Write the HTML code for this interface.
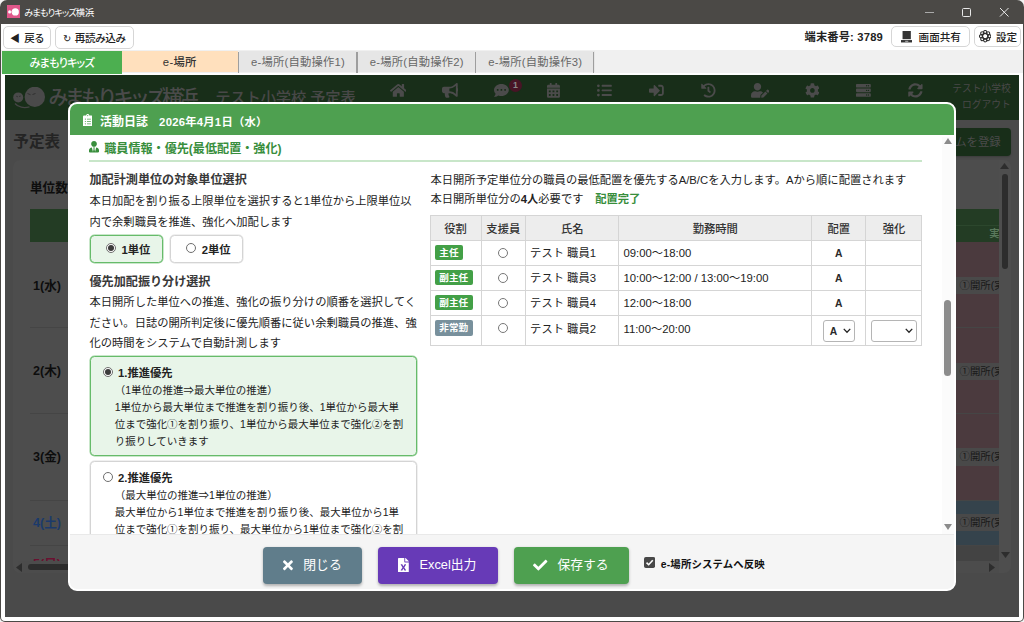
<!DOCTYPE html>
<html lang="ja">
<head>
<meta charset="utf-8">
<title>みまもりキッズ横浜</title>
<style>
*{box-sizing:border-box;margin:0;padding:0}
html,body{width:1024px;height:622px;overflow:hidden;background:#f2f2f2}
body{font-family:"Liberation Sans","Noto Sans CJK JP",sans-serif;color:#222;position:relative}
.abs{position:absolute}
#win{position:absolute;left:0;top:0;width:1024px;height:622px;background:#4b4946;border-radius:7px 7px 5px 5px;overflow:hidden}
#client{position:absolute;left:1.3px;top:24px;width:1021.3px;height:596.6px;background:#fff;border-radius:0 0 4px 4px}
#title{position:absolute;left:24.3px;top:4.6px;height:16px;line-height:16px;font-size:9.2px;color:#fff;font-feature-settings:"palt";letter-spacing:-0.95px;white-space:nowrap}
.tbtn{position:absolute;top:26px;height:22.5px;border:1px solid #d6d6d6;border-radius:5px;background:#fff;font-size:10.6px;font-weight:500;color:#222;line-height:23px;white-space:nowrap}
.tab{position:absolute;top:51.3px;height:20.7px;line-height:22.4px;text-align:center;font-size:11.3px;white-space:nowrap}
.tbtn.r{height:20.5px;line-height:21.5px}
#web{position:absolute;left:5px;top:75px;width:1013.8px;height:542.4px;background:#4a4a4a;overflow:hidden}
.cel{left:940px;width:54px;height:17.5px;background:#494949;color:#191919;font-size:10.4px;line-height:17.5px;padding-left:14.5px;white-space:nowrap;overflow:hidden}
.hl{left:24.5px;width:969.5px;height:1.2px;background:#454545}
.day{left:28px;font-size:12.6px;line-height:20px;font-weight:700;color:#0d0d0d;white-space:nowrap}
#modal{position:absolute;left:63px;top:27px;width:888px;height:488.6px;background:#fff;border-radius:9px;overflow:hidden;border:2px solid #fff}
#mhead{position:absolute;left:0;top:0;width:884px;height:30.5px;background:#4ea050;color:#fff;line-height:36.6px;white-space:nowrap}
#mbody{position:absolute;left:0;top:30.5px;width:884px;height:399px;overflow:hidden;background:#fff}
#mfoot{position:absolute;left:0;top:429.5px;width:884px;height:57px;background:#f5f5f5;border-top:1px solid #e9e9e9}
.sec{font-size:12.1px;font-weight:700;color:#388e3c;line-height:20px;white-space:nowrap}
.h4{font-size:12.1px;font-weight:700;color:#383838;line-height:20px;white-space:nowrap}
.p{font-size:11.29px;color:#222;line-height:20.4px;white-space:nowrap}
.opt{border:1px solid #d4d4d4;border-radius:4.5px;background:#fff;box-shadow:0 0 0 .5px rgba(212,212,212,.7)}
.opt.on{border-color:#66bb6a;background:#e8f5e9;box-shadow:0 0 0 .5px rgba(102,187,106,.7)}
.opt b,.opt i{position:absolute;white-space:nowrap}
.opt b{font-size:11.3px;font-weight:700;color:#222}
.rd{width:10.2px;height:10.2px;border-radius:50%;border:1px solid #6e6e6e;background:#fff}
.rd.on::after{content:"";position:absolute;left:1.1px;top:1.1px;width:6px;height:6px;border-radius:50%;background:#3c3c3c}
.d{font-size:10.49px;line-height:17.1px;color:#222;white-space:nowrap}
#tb{position:absolute;left:359.5px;top:80.6px;border-collapse:collapse;table-layout:fixed;font-size:11.3px;color:#222}
#tb th,#tb td{border:1px solid #d5d5d5;padding:0 4px 1.8px 4px;white-space:nowrap;overflow:hidden}
#tb th{background:#ededed;font-weight:500;color:#333;height:25px;text-align:center;padding:0 0 1.2px 0}
#tb tr{height:25px}
#tb tr.hd{height:25px}
#tb tr.r1{height:25px}
#tb tr.last{height:29.8px}
#tb tr.last td{vertical-align:top;line-height:24.6px;padding-bottom:0}
#tb .t{position:relative;top:-0.6px}
#tb tr.last .t{top:0.5px}
#tb tr.last .bdg,#tb tr.last .rd2{position:relative;top:-1.1px}
#tb tr.last td.s{padding-top:3.6px;line-height:20px}
#tb td b{font-size:10.3px;color:#2a2a2a;position:relative;top:0.8px}
#tb td .sel b{top:0}
#tb td.c{text-align:center;padding:0 0 1.8px 0}
.bdg{display:inline-block;background:#43a047;color:#fff;font-size:9.6px;font-weight:700;line-height:15.2px;height:15.2px;padding:0 4.5px;border-radius:2px;vertical-align:middle;margin-left:0.3px}
.bdg.g{background:#78909c}
.rd2{display:inline-block;width:10.4px;height:10.4px;border-radius:50%;border:1px solid #777;background:#fff;vertical-align:middle}
.sel{display:inline-block;height:22px;border:1px solid #b5b5b5;border-radius:3px;background:#fff;vertical-align:middle;position:relative;text-align:left;line-height:20px;padding-left:6px}
.sel svg{position:absolute;right:2.8px;top:7.4px}
.btn{height:36.5px;border-radius:4px;color:#fff;font-size:12.8px;line-height:36.5px;white-space:nowrap;box-shadow:0 1.5px 3px rgba(0,0,0,.28)}
</style>
</head>
<body>
<div id="win">
  <svg class="abs" style="left:7px;top:5px" width="13" height="13" viewBox="0 0 13 13"><rect width="13" height="13" fill="#e0578a"/><circle cx="2.700" cy="6.900" r="1.600" fill="#fff"/><circle cx="8.3" cy="6.9" r="3.6" fill="#fff"/><path d="M3.500 6.900h2" stroke="#f5c0d4" stroke-width="1"/></svg>
  <div id="title">みまもりキッズ<span style="letter-spacing:0.1px">横浜</span></div>
  <svg class="abs" style="left:920px;top:4px" width="100" height="16" viewBox="0 0 100 16" fill="none" stroke="#e8e8e8" stroke-width="1"><path d="M5 8.5h9" stroke="#aaa"/><rect x="42.5" y="4.5" width="8" height="8" rx="1"/><path d="M80 4l8.5 8.5M88.5 4L80 12.5"/></svg>
  <div id="client"></div>

  <!-- toolbar -->
  <div class="tbtn" style="left:3px;width:47.5px"><span class="abs" style="left:6px;top:0;font-size:10px">◀</span><span class="abs" style="left:20.3px;top:0;font-feature-settings:'palt';letter-spacing:-0.3px">戻る</span></div>
  <div class="tbtn" style="left:55px;width:78.6px"><span class="abs" style="left:7px;top:0;font-size:10px;font-family:'DejaVu Sans',sans-serif">↻</span><span class="abs" style="left:18.8px;top:0;font-feature-settings:'palt';letter-spacing:-0.35px">再読み込み</span></div>
  <div class="abs" style="left:804.5px;top:27px;height:20px;line-height:20px;font-size:11.2px;font-weight:700;color:#222;white-space:nowrap;letter-spacing:0.2px">端末番号: 3789</div>
  <div class="tbtn r" style="left:890.8px;width:79.6px"><svg class="abs" style="left:9.2px;top:3.6px" width="11.4" height="12" viewBox="0 0 11 11" preserveAspectRatio="none"><rect x="1.5" y="0" width="8" height="7.5" fill="#333"/><rect x="0" y="8.3" width="11" height="2.2" fill="#333"/><rect x="4" y="9" width="3" height="0.8" fill="#ccc"/></svg><span class="abs" style="left:26.8px;top:0">画面共有</span></div>
  <div class="tbtn r" style="left:973.5px;width:47px"><svg class="abs" style="left:4.3px;top:3.3px" width="12.4" height="12.4" viewBox="0 0 12 12" fill="none" stroke="#2e2e2e" stroke-width="1.05"><circle cx="10.00" cy="6.00" r="1.55"/><circle cx="8.83" cy="8.83" r="1.55"/><circle cx="6.00" cy="10.00" r="1.55"/><circle cx="3.17" cy="8.83" r="1.55"/><circle cx="2.00" cy="6.00" r="1.55"/><circle cx="3.17" cy="3.17" r="1.55"/><circle cx="6.00" cy="2.00" r="1.55"/><circle cx="8.83" cy="3.17" r="1.55"/><circle cx="6" cy="6" r="2.7" stroke-width="1.3"/></svg><span class="abs" style="left:21.5px;top:0">設定</span></div>
  <!-- tabs -->
  <div class="abs" style="left:1px;top:50px;width:1022px;height:23.4px;background:#f0f0f0"></div>
  <div class="tab" style="left:2px;width:119.5px;top:50.6px;height:23px;line-height:24px;background:#4caf50;color:#fff;font-feature-settings:'palt';letter-spacing:-0.75px;font-size:11px;font-weight:500">みまもりキッズ</div>
  <div class="tab" style="left:121.5px;width:116.5px;background:#ffe0bd;color:#333;letter-spacing:0.3px;font-weight:500">e-場所</div>
  <div class="tab" style="left:238.5px;width:119px;background:#e6e6e6;color:#666;letter-spacing:0.22px">e-場所(自動操作1)</div>
  <div class="tab" style="left:357.5px;width:118.5px;background:#e6e6e6;color:#666;letter-spacing:0.22px">e-場所(自動操作2)</div>
  <div class="tab" style="left:476px;width:118.5px;background:#e6e6e6;color:#666;letter-spacing:0.22px">e-場所(自動操作3)</div>
  <div class="abs" style="left:237.6px;top:51.5px;width:1.4px;height:21px;background:#9e9e9e"></div><div class="abs" style="left:356.2px;top:51.5px;width:1.4px;height:21px;background:#9e9e9e"></div><div class="abs" style="left:474.6px;top:51.5px;width:1.4px;height:21px;background:#9e9e9e"></div><div class="abs" style="left:593.1px;top:51.5px;width:1.4px;height:21px;background:#9e9e9e"></div>
  <div id="web">

    <!-- dimmed page -->
    <div class="abs" style="left:0;top:0;width:1014px;height:44.5px;background:#182e19"></div>
    <svg class="abs" style="left:8px;top:12px" width="36" height="24" viewBox="0 0 36 24"><circle cx="5.200" cy="10.400" r="5" fill="#4a4a4a"/><path d="M2 16.500c3 3.800 9 5 14.500 3.300" stroke="#454545" stroke-width="1.300" fill="none"/><circle cx="21.800" cy="9.900" r="10.200" fill="#4a4a4a"/><path d="M14.500 6.500l3 1.200M19.500 7.500l3-1M3.300 9.200l1.500.6M6.200 9.500l1.500-.5" stroke="#2c2c2c" stroke-width="0.900"/></svg>
    <div class="abs" style="left:43.6px;top:9.2px;font-size:20px;line-height:28px;font-weight:500;color:#4a4a4a;white-space:nowrap;letter-spacing:-3.75px" id="logo">みまもりキッズ横浜</div>
    <div class="abs" style="left:210.2px;top:10.4px;font-size:15.3px;line-height:26px;font-weight:500;color:#484848;white-space:nowrap;letter-spacing:-0.15px" id="school">テスト小学校 予定表</div>
    <div class="abs" style="right:8px;top:5.6px;font-size:9.75px;line-height:16.3px;color:#484848;text-align:right;white-space:nowrap">テスト小学校<br>ログアウト</div>
    <!-- navbar icons -->
    <svg class="abs" style="left:384.68px;top:8px" width="16.65" height="14.8" viewBox="0 0 576 512"><path d="M280.37 148.26L96 300.11V464a16 16 0 0 0 16 16l112.06-.29a16 16 0 0 0 15.92-16V368a16 16 0 0 1 16-16h64a16 16 0 0 1 16 16v95.64a16 16 0 0 0 16 16.05L464 480a16 16 0 0 0 16-16V300L295.67 148.26a12.19 12.19 0 0 0-15.3 0zM571.6 251.47L488 182.56V44.05a12 12 0 0 0-12-12h-56a12 12 0 0 0-12 12v72.61L318.47 43a48 48 0 0 0-61 0L4.34 251.47a12 12 0 0 0-1.6 16.9l25.5 31A12 12 0 0 0 45.15 301l235.22-193.74a12.19 12.19 0 0 1 15.3 0L530.9 301a12 12 0 0 0 16.9-1.6l25.5-31a12 12 0 0 0-1.7-16.93z" fill="#4b4b4b"/></svg>
    <svg class="abs" style="left:436.57px;top:8px" width="16.65" height="14.8" viewBox="0 0 576 512"><path d="M576 240c0-23.63-12.95-44.04-32-55.12V32.01C544 23.26 537.02 0 512 0c-7.12 0-14.19 2.38-19.98 7.02l-85.03 68.03C364.28 109.19 310.66 128 256 128H64c-35.35 0-64 28.65-64 64v96c0 35.35 28.65 64 64 64h33.7c-1.39 10.48-2.18 21.14-2.18 32 0 39.77 9.26 77.35 25.56 110.94 5.19 10.69 16.52 17.06 28.4 17.06h74.28c26.05 0 41.69-29.84 25.9-50.56-16.4-21.52-26.15-48.36-26.15-77.44 0-11.11 1.62-21.79 4.41-32H256c54.66 0 108.28 18.81 150.98 52.95l85.03 68.03a32.023 32.023 0 0 0 19.98 7.02c24.92 0 32-22.78 32-32V295.13C563.05 284.04 576 263.63 576 240zm-96 141.42l-33.05-26.44C392.95 311.78 325.12 288 256 288v-96c69.12 0 136.95-23.78 190.95-66.98L480 98.58v282.84z" fill="#4b4b4b"/></svg>
    <svg class="abs" style="left:489.1px;top:8px" width="14.8" height="14.8" viewBox="0 0 512 512"><path d="M256 32C114.6 32 0 125.1 0 240c0 49.6 21.4 95 57 130.7C44.5 421.1 2.7 466 2.2 466.5c-2.2 2.3-2.8 5.700-1.500 8.700S4.800 480 8 480c66.300 0 116-31.800 140.600-51.400 32.700 12.300 69 19.400 107.400 19.400 141.400 0 256-93.100 256-208S397.400 32 256 32zM128 272c-17.700 0-32-14.300-32-32s14.300-32 32-32 32 14.300 32 32-14.300 32-32 32zm128 0c-17.700 0-32-14.300-32-32s14.300-32 32-32 32 14.300 32 32-14.300 32-32 32zm128 0c-17.700 0-32-14.300-32-32s14.300-32 32-32 32 14.300 32 32-14.300 32-32 32z" fill="#4b4b4b"/></svg>
    <svg class="abs" style="left:541.82px;top:8px" width="12.95" height="14.8" viewBox="0 0 448 512"><path d="M0 464c0 26.500 21.500 48 48 48h352c26.500 0 48-21.500 48-48V192H0v272zm320-196c0-6.600 5.400-12 12-12h40c6.600 0 12 5.400 12 12v40c0 6.600-5.400 12-12 12h-40c-6.600 0-12-5.400-12-12v-40zm0 128c0-6.600 5.400-12 12-12h40c6.600 0 12 5.400 12 12v40c0 6.600-5.400 12-12 12h-40c-6.600 0-12-5.400-12-12v-40zM192 268c0-6.600 5.400-12 12-12h40c6.600 0 12 5.400 12 12v40c0 6.600-5.400 12-12 12h-40c-6.600 0-12-5.400-12-12v-40zm0 128c0-6.600 5.400-12 12-12h40c6.600 0 12 5.400 12 12v40c0 6.600-5.400 12-12 12h-40c-6.600 0-12-5.400-12-12v-40zM64 268c0-6.600 5.400-12 12-12h40c6.600 0 12 5.400 12 12v40c0 6.600-5.400 12-12 12H76c-6.600 0-12-5.400-12-12v-40zm0 128c0-6.600 5.400-12 12-12h40c6.600 0 12 5.400 12 12v40c0 6.600-5.400 12-12 12H76c-6.600 0-12-5.400-12-12v-40zM400 64h-48V16c0-8.800-7.200-16-16-16h-32c-8.800 0-16 7.200-16 16v48H160V16c0-8.800-7.200-16-16-16h-32c-8.800 0-16 7.200-16 16v48H48C21.500 64 0 85.500 0 112v48h448v-48c0-26.500-21.500-48-48-48z" fill="#4b4b4b"/></svg>
    <svg class="abs" style="left:592.4px;top:8px" width="14.8" height="14.8" viewBox="0 0 512 512"><path d="M48 48a48 48 0 1 0 48 48 48 48 0 0 0-48-48zm0 160a48 48 0 1 0 48 48 48 48 0 0 0-48-48zm0 160a48 48 0 1 0 48 48 48 48 0 0 0-48-48zm448 16H176a16 16 0 0 0-16 16v32a16 16 0 0 0 16 16h320a16 16 0 0 0 16-16v-32a16 16 0 0 0-16-16zm0-320H176a16 16 0 0 0-16 16v32a16 16 0 0 0 16 16h320a16 16 0 0 0 16-16V80a16 16 0 0 0-16-16zm0 160H176a16 16 0 0 0-16 16v32a16 16 0 0 0 16 16h320a16 16 0 0 0 16-16v-32a16 16 0 0 0-16-16z" fill="#4b4b4b"/></svg>
    <svg class="abs" style="left:644.2px;top:8px" width="14.8" height="14.8" viewBox="0 0 512 512"><path d="M416 448h-84c-6.600 0-12-5.400-12-12v-40c0-6.600 5.400-12 12-12h84c17.700 0 32-14.300 32-32V160c0-17.700-14.300-32-32-32h-84c-6.600 0-12-5.400-12-12V76c0-6.600 5.400-12 12-12h84c53 0 96 43 96 96v192c0 53-43 96-96 96zm-47-201L201 79c-15-15-41-4.500-41 17v96H24c-13.300 0-24 10.700-24 24v96c0 13.300 10.700 24 24 24h136v96c0 21.500 26 32 41 17l168-168c9.300-9.400 9.300-24.600 0-34z" fill="#4b4b4b"/></svg>
    <svg class="abs" style="left:696.0px;top:8px" width="14.8" height="14.8" viewBox="0 0 512 512"><path d="M504 255.531c.253 136.640-111.180 248.372-247.820 248.468-59.015.042-113.223-20.530-155.822-54.911-11.077-8.940-11.905-25.541-1.839-35.607l11.267-11.267c8.609-8.609 22.353-9.551 31.891-1.984C173.062 425.135 212.781 440 256 440c101.705 0 184-82.311 184-184 0-101.705-82.311-184-184-184-48.814 0-93.149 18.969-126.068 49.932l50.754 50.754c10.080 10.080 2.941 27.314-11.313 27.314H24c-8.837 0-16-7.163-16-16V38.627c0-14.254 17.234-21.393 27.314-11.314l49.372 49.372C129.209 34.136 189.552 8 256 8c136.810 0 247.747 110.780 248 247.531zm-180.912 78.784l9.823-12.630c8.138-10.463 6.253-25.542-4.210-33.679L288 256.349V152c0-13.255-10.745-24-24-24h-16c-13.255 0-24 10.745-24 24v135.651l65.409 50.874c10.463 8.137 25.541 6.253 33.679-4.210z" fill="#4b4b4b"/></svg>
    <svg class="abs" style="left:745.75px;top:8px" width="18.5" height="14.8" viewBox="0 0 640 512"><path d="M224 256c70.700 0 128-57.300 128-128S294.700 0 224 0 96 57.300 96 128s57.300 128 128 128zm89.600 32h-16.700c-22.200 10.200-46.900 16-72.900 16s-50.600-5.800-72.900-16h-16.700C60.200 288 0 348.200 0 422.400V464c0 26.500 21.500 48 48 48h274.900c-2.400-6.800-3.400-14-2.600-21.300l6.800-60.900 1.200-11.100 7.900-7.900 77.300-77.300c-24.500-27.700-60-45.500-99.900-45.500zm45.300 145.300l-6.800 61c-1.100 10.200 7.500 18.800 17.600 17.600l60.900-6.800 137.900-137.900-71.700-71.700-137.900 137.800zM633 268.900L595.100 231c-9.300-9.300-24.500-9.300-33.800 0l-37.800 37.800-4.100 4.100 71.800 71.700 41.800-41.800c9.300-9.400 9.300-24.500 0-33.900z" fill="#4b4b4b"/></svg>
    <svg class="abs" style="left:799.5px;top:8px" width="14.8" height="14.8" viewBox="0 0 512 512"><path d="M487.400 315.700l-42.600-24.600c4.300-23.200 4.300-47 0-70.200l42.600-24.600c4.900-2.800 7.100-8.600 5.500-14-11.100-35.600-30-67.800-54.700-94.600-3.800-4.100-10-5.100-14.800-2.300L380.800 110c-17.900-15.400-38.500-27.300-60.800-35.100V25.800c0-5.600-3.900-10.500-9.400-11.700-36.700-8.200-74.300-7.800-109.200 0-5.500 1.200-9.400 6.100-9.400 11.700V75c-22.200 7.900-42.800 19.800-60.800 35.100L88.700 85.500c-4.900-2.800-11-1.900-14.800 2.300-24.700 26.700-43.600 58.900-54.700 94.600-1.700 5.400.6 11.200 5.500 14L67.300 221c-4.300 23.200-4.300 47 0 70.200l-42.600 24.600c-4.900 2.800-7.100 8.600-5.500 14 11.100 35.600 30 67.800 54.700 94.600 3.800 4.100 10 5.100 14.800 2.300l42.600-24.600c17.900 15.400 38.500 27.300 60.800 35.100v49.200c0 5.600 3.900 10.500 9.400 11.700 36.700 8.200 74.300 7.800 109.200 0 5.500-1.200 9.400-6.100 9.400-11.700v-49.200c22.200-7.900 42.800-19.800 60.800-35.100l42.600 24.600c4.900 2.800 11 1.900 14.800-2.300 24.700-26.700 43.600-58.900 54.700-94.600 1.500-5.500-.7-11.300-5.600-14.100zM256 336c-44.100 0-80-35.900-80-80s35.900-80 80-80 80 35.900 80 80-35.900 80-80 80z" fill="#4b4b4b"/></svg>
    <svg class="abs" style="left:851.0px;top:8px" width="14.8" height="14.8" viewBox="0 0 512 512"><path d="M480 160H32c-17.673 0-32-14.327-32-32V64c0-17.673 14.327-32 32-32h448c17.673 0 32 14.327 32 32v64c0 17.673-14.327 32-32 32zm-48-88c-13.255 0-24 10.745-24 24s10.745 24 24 24 24-10.745 24-24-10.745-24-24-24zm-64 0c-13.255 0-24 10.745-24 24s10.745 24 24 24 24-10.745 24-24-10.745-24-24-24zm112 248H32c-17.673 0-32-14.327-32-32v-64c0-17.673 14.327-32 32-32h448c17.673 0 32 14.327 32 32v64c0 17.673-14.327 32-32 32zm-48-88c-13.255 0-24 10.745-24 24s10.745 24 24 24 24-10.745 24-24-10.745-24-24-24zm-64 0c-13.255 0-24 10.745-24 24s10.745 24 24 24 24-10.745 24-24-10.745-24-24-24zm112 248H32c-17.673 0-32-14.327-32-32v-64c0-17.673 14.327-32 32-32h448c17.673 0 32 14.327 32 32v64c0 17.673-14.327 32-32 32zm-48-88c-13.255 0-24 10.745-24 24s10.745 24 24 24 24-10.745 24-24-10.745-24-24-24zm-64 0c-13.255 0-24 10.745-24 24s10.745 24 24 24 24-10.745 24-24-10.745-24-24-24z" fill="#4b4b4b"/></svg>
    <svg class="abs" style="left:902.9px;top:8px" width="14.8" height="14.8" viewBox="0 0 512 512"><path d="M370.720 133.280C339.458 104.008 298.888 87.962 255.848 88c-77.458.068-144.328 53.178-162.791 126.850-1.344 5.363-6.122 9.150-11.651 9.150H24.103c-7.498 0-13.194-6.807-11.807-14.176C33.933 94.924 134.813 8 256 8c66.448 0 126.791 26.136 171.315 68.685L463.030 40.970C478.149 25.851 504 36.559 504 57.941V192c0 13.255-10.745 24-24 24H345.941c-21.382 0-32.090-25.851-16.971-40.971l41.750-41.749zM32 296h134.059c21.382 0 32.090 25.851 16.971 40.971l-41.750 41.750c31.262 29.273 71.835 45.319 114.876 45.280 77.418-.07 144.315-53.144 162.787-126.849 1.344-5.363 6.122-9.150 11.651-9.150h57.304c7.498 0 13.194 6.807 11.807 14.176C478.067 417.076 377.187 504 256 504c-66.448 0-126.791-26.136-171.315-68.685L48.970 471.030C33.851 486.149 8 475.441 8 454.059V320c0-13.255 10.745-24 24-24z" fill="#4b4b4b"/></svg>
    <div class="abs" style="left:503.9px;top:3.8px;width:13px;height:13px;border-radius:50%;background:#481426;color:#888;font-size:8.8px;font-weight:700;line-height:13px;text-align:center">1</div>
    <div class="abs" style="left:8.3px;top:56.6px;font-size:15.6px;line-height:20px;font-weight:700;color:#242424;white-space:nowrap">予定表</div>
    <div class="abs" style="left:925px;top:53px;width:81px;height:27.5px;border-radius:4px;background:#182e19;color:#4b4b4b;font-size:11.4px;line-height:29.3px;text-align:right;padding-right:10.3px;white-space:nowrap;box-shadow:0 1px 2px rgba(0,0,0,.2)">ムを登録</div>
    <div class="abs" style="left:8px;top:84.5px;width:998px;height:413px;background:#4d4d4d;border-radius:7px"></div>
    <div class="abs" style="left:25px;top:102.5px;font-size:12.6px;line-height:20px;font-weight:700;color:#0d0d0d;white-space:nowrap">単位数</div>
    <!-- table -->
    <div class="abs" style="left:24.5px;top:133.5px;width:969.5px;height:33px;background:#233c24"></div>
    <div class="abs" style="left:600px;top:149.5px;width:394px;height:1px;background:#2c472d"></div>
    <div class="abs" style="left:984.3px;top:151px;font-size:10.4px;line-height:16px;font-weight:700;color:#5a785c;white-space:nowrap">実績</div>
    <div class="abs" style="left:940px;top:166.5px;width:54px;height:258.5px;background:#4b3a3e"></div>
    <div class="abs" style="left:940px;top:425px;width:54px;height:45px;background:#35434c"></div>
    <div class="abs" style="left:940px;top:470px;width:54px;height:16px;background:#434343"></div>
    <div class="abs cel" style="top:201.5px">①開所(実</div>
    <div class="abs cel" style="top:287.5px">①開所(実</div>
    <div class="abs cel" style="top:373px">①開所(実</div>
    <div class="abs cel" style="top:438.5px">①開所(実</div>
    <div class="abs hl" style="top:252px"></div><div class="abs hl" style="top:337.5px"></div><div class="abs hl" style="top:425px"></div><div class="abs hl" style="top:470px"></div>
    <div class="abs day" style="top:201px">1(水)</div>
    <div class="abs day" style="top:286px">2(木)</div>
    <div class="abs day" style="top:372px">3(金)</div>
    <div class="abs day" style="top:438px;color:#1b3a6b">4(土)</div>
    <div class="abs day" style="top:479.2px;color:#6b1030;height:8px;overflow:hidden">5(日)</div>
    <!-- page scrollbars -->
    <div class="abs" style="left:994px;top:84.5px;width:12px;height:413px;background:#4e4e4e;border-radius:0 7px 7px 0"></div>
    <div class="abs" style="left:13px;top:486px;width:981px;height:11.5px;background:#4c4c4c"></div>
    <div class="abs" style="left:996.5px;top:99px;width:6.5px;height:95px;border-radius:3.5px;background:#2d2d2d"></div>
    <div class="abs" style="left:23px;top:488.5px;width:600px;height:6.5px;border-radius:3.5px;background:#2d2d2d"></div>
    <svg class="abs" style="left:994.8px;top:87.8px" width="9" height="6" viewBox="0 0 9 6"><path d="M0 6L4.5 0 9 6z" fill="#2d2d2d"/></svg>
    <svg class="abs" style="left:995.5px;top:477px" width="9" height="6" viewBox="0 0 9 6"><path d="M0 0L4.5 6 9 0z" fill="#2d2d2d"/></svg>
    <svg class="abs" style="left:11px;top:487.5px" width="6" height="9" viewBox="0 0 6 9"><path d="M6 0L0 4.5 6 9z" fill="#2d2d2d"/></svg>
    <svg class="abs" style="left:984px;top:487.5px" width="6" height="9" viewBox="0 0 6 9"><path d="M0 0L6 4.5 0 9z" fill="#2d2d2d"/></svg>

  <!-- modal -->
  <div id="modal">
    <div id="mhead">
      <svg class="abs" style="left:12.6px;top:9.8px" width="9.45" height="12.6" viewBox="0 0 384 512"><path d="M336 64h-80c0-35.300-28.700-64-64-64s-64 28.700-64 64H48C21.500 64 0 85.500 0 112v352c0 26.500 21.500 48 48 48h288c26.500 0 48-21.500 48-48V112c0-26.500-21.500-48-48-48zM96 424c-13.300 0-24-10.700-24-24s10.700-24 24-24 24 10.700 24 24-10.700 24-24 24zm0-96c-13.300 0-24-10.700-24-24s10.700-24 24-24 24 10.700 24 24-10.700 24-24 24zm0-96c-13.300 0-24-10.700-24-24s10.700-24 24-24 24 10.700 24 24-10.700 24-24 24zm96-192c13.300 0 24 10.700 24 24s-10.700 24-24 24-24-10.700-24-24 10.700-24 24-24zm128 368c0 4.400-3.600 8-8 8H168c-4.400 0-8-3.600-8-8v-16c0-4.400 3.600-8 8-8h144c4.400 0 8 3.600 8 8v16zm0-96c0 4.400-3.600 8-8 8H168c-4.400 0-8-3.600-8-8v-16c0-4.400 3.600-8 8-8h144c4.400 0 8 3.600 8 8v16zm0-96c0 4.400-3.600 8-8 8H168c-4.400 0-8-3.600-8-8v-16c0-4.400 3.600-8 8-8h144c4.400 0 8 3.600 8 8v16z" fill="#fff"/></svg>
      <span class="abs" style="left:30px;top:0;font-size:12px;font-weight:700">活動日誌</span>
      <span class="abs" style="left:89.1px;top:0;font-size:11.3px;font-weight:700;letter-spacing:0.25px">2026年4月1日（水）</span>
    </div>
    <div id="mbody">

      <svg class="abs" style="left:19.2px;top:6.7px" width="10.06" height="11.5" viewBox="0 0 448 512"><path d="M224 256c70.700 0 128-57.300 128-128S294.700 0 224 0 96 57.300 96 128s57.300 128 128 128zm95.800 32.600L272 480l-32-136 32-56h-96l32 56-32 136-47.800-191.400C56.900 292 0 350.300 0 422.400V464c0 26.500 21.500 48 48 48h352c26.500 0 48-21.500 48-48v-41.600c0-72.100-56.900-130.400-128.200-133.800z" fill="#388e3c"/></svg>
      <div class="abs sec" style="left:34.2px;top:4px">職員情報・優先(最低配置・強化)</div>
      <div class="abs" style="left:19.2px;top:25.8px;width:832.8px;height:1.5px;background:#c8e6c9"></div>
      <!-- left column -->
      <div class="abs h4" style="left:19.5px;top:35.5px">加配計測単位の対象単位選択</div>
      <div class="abs p" style="left:19.5px;top:56.1px;line-height:21px">本日加配を割り振る上限単位を選択すると1単位から上限単位以<br>内で余剰職員を推進、強化へ加配します</div>
      <div class="abs opt on" style="left:19.8px;top:100.5px;width:73.2px;height:28.4px"><i class="rd on" style="left:15.4px;top:7.2px"></i><b style="left:30.7px;top:0;line-height:28.6px">1単位</b></div>
      <div class="abs opt" style="left:100px;top:100.5px;width:72.8px;height:28.4px"><i class="rd" style="left:15.2px;top:7.2px"></i><b style="left:30.7px;top:0;line-height:28.6px">2単位</b></div>
      <div class="abs h4" style="left:19.5px;top:137px">優先加配振り分け選択</div>
      <div class="abs p" style="left:19.5px;top:157.9px;line-height:20.15px">本日開所した単位への推進、強化の振り分けの順番を選択してく<br>ださい。日誌の開所判定後に優先順番に従い余剰職員の推進、強<br>化の時間をシステムで自動計測します</div>
      <div class="abs opt on" style="left:19.6px;top:221.8px;width:327.8px;height:99.8px"><i class="rd on" style="left:12.6px;top:9.5px"></i><b style="left:27.4px;top:5.6px;line-height:20px">1.推進優先</b>
        <div class="abs d" style="left:24.1px;top:24.7px">（1単位の推進⇒最大単位の推進）<br>1単位から最大単位まで推進を割り振り後、1単位から最大単<br>位まで強化①を割り振り、1単位から最大単位まで強化②を割<br>り振りしていきます</div></div>
      <div class="abs opt" style="left:19.6px;top:326.8px;width:327.8px;height:99.8px"><i class="rd" style="left:12.6px;top:9.5px"></i><b style="left:27.4px;top:5.6px;line-height:20px">2.推進優先</b>
        <div class="abs d" style="left:24.1px;top:24.7px">（最大単位の推進⇒1単位の推進）<br>最大単位から1単位まで推進を割り振り後、最大単位から1単<br>位まで強化①を割り振り、最大単位から1単位まで強化②を割<br>り振りしていきます</div></div>
      <!-- right column -->
      <div class="abs p" style="left:360.5px;top:36.4px;line-height:19px">本日開所予定単位分の職員の最低配置を優先するA/B/Cを入力します。Aから順に配置されます<br>本日開所単位分の<b style="position:static">4人</b>必要です<span style="color:#388e3c;font-weight:700;margin-left:11.8px">配置完了</span></div>
      <table id="tb">
        <tr class="hd"><th style="width:51px">役割</th><th style="width:44.6px">支援員</th><th style="width:93.4px">氏名</th><th style="width:192.7px">勤務時間</th><th style="width:54.3px">配置</th><th style="width:56px">強化</th></tr>
        <tr class="r1"><td><span class="bdg">主任</span></td><td class="c"><i class="rd2"></i></td><td><span class="t">テスト 職員1</span></td><td><span class="t">09:00〜18:00</span></td><td class="c"><b>A</b></td><td></td></tr>
        <tr><td><span class="bdg">副主任</span></td><td class="c"><i class="rd2"></i></td><td><span class="t">テスト 職員3</span></td><td><span class="t">10:00〜12:00 / 13:00〜19:00</span></td><td class="c"><b>A</b></td><td></td></tr>
        <tr><td><span class="bdg">副主任</span></td><td class="c"><i class="rd2"></i></td><td><span class="t">テスト 職員4</span></td><td><span class="t">12:00〜18:00</span></td><td class="c"><b>A</b></td><td></td></tr>
        <tr class="last"><td><span class="bdg g">非常勤</span></td><td class="c"><i class="rd2"></i></td><td><span class="t">テスト 職員2</span></td><td><span class="t">11:00〜20:00</span></td><td class="c s"><span class="sel" style="width:32px"><b>A</b><svg width="8" height="5.600" viewBox="0 0 7 5"><path d="M.6.8l2.900 3 2.900-3" fill="none" stroke="#222" stroke-width="1.150"/></svg></span></td><td class="c s"><span class="sel" style="width:46px"><svg width="8" height="5.600" viewBox="0 0 7 5"><path d="M.6.8l2.900 3 2.900-3" fill="none" stroke="#222" stroke-width="1.150"/></svg></span></td></tr>
      </table>
      <!-- modal scrollbar -->
      <div class="abs" style="left:872px;top:2px;width:12px;height:397px;background:#fbfbfb"></div>
      <svg class="abs" style="left:874px;top:3.5px" width="8" height="6" viewBox="0 0 8 6"><path d="M0 6L4 0l4 6z" fill="#8b8b8b"/></svg>
      <svg class="abs" style="left:874px;top:389.5px" width="8" height="6" viewBox="0 0 8 6"><path d="M0 0l4 6 4-6z" fill="#8b8b8b"/></svg>
      <div class="abs" style="left:874.4px;top:165.3px;width:7px;height:76px;border-radius:3.5px;background:#8c8c8c"></div>
    </div>
    <div id="mfoot">

      <div class="abs btn" style="left:193px;top:12.5px;width:98.5px;background:#607d8b"><svg class="abs" style="left:19.9px;top:10.9px" width="9.9" height="14.4" viewBox="0 0 352 512"><path d="M242.720 256l100.070-100.070c12.280-12.280 12.280-32.190 0-44.480l-22.240-22.240c-12.280-12.280-32.190-12.280-44.480 0L176 189.280 75.930 89.210c-12.280-12.280-32.190-12.280-44.480 0L9.210 111.450c-12.280 12.280-12.280 32.190 0 44.480L109.280 256 9.210 356.070c-12.280 12.280-12.280 32.190 0 44.480l22.240 22.240c12.280 12.280 32.200 12.280 44.480 0L176 322.720l100.070 100.070c12.280 12.280 32.200 12.280 44.480 0l22.240-22.240c12.280-12.280 12.280-32.190 0-44.480L242.720 256z" fill="#fff"/></svg><span class="abs" style="left:40.3px;top:0">閉じる</span></div>
      <div class="abs btn" style="left:308px;top:12.5px;width:119.5px;background:#673ab7"><svg class="abs" style="left:20.3px;top:10.9px" width="10.8" height="14.4" viewBox="0 0 384 512"><path d="M224 136V0H24C10.700 0 0 10.700 0 24v464c0 13.300 10.700 24 24 24h336c13.300 0 24-10.700 24-24V160H248c-13.200 0-24-10.800-24-24zm60.100 106.500L224 336l60.100 93.500c5.100 8-.6 18.500-10.100 18.500h-34.900c-4.400 0-8.500-2.400-10.600-6.300C208.900 405.500 192 373 192 373c-6.400 14.800-10 20-36.600 68.800-2.100 3.900-6.100 6.300-10.500 6.300H110c-9.500 0-15.200-10.500-10.100-18.500l60.300-93.500-60.300-93.500c-5.200-8 .6-18.500 10.100-18.500h34.800c4.400 0 8.500 2.400 10.600 6.300 26.100 48.800 20 33.600 36.600 68.500 0 0 6.100-11.700 36.600-68.500 2.100-3.900 6.200-6.300 10.600-6.300H274c9.500-.1 15.200 10.400 10.100 18.400zM384 121.900v6.100H256V0h6.100c6.400 0 12.500 2.500 17 7l97.900 98c4.500 4.500 7 10.600 7 16.900z" fill="#fff"/></svg><span class="abs" style="left:41.5px;top:0">Excel出力</span></div>
      <div class="abs btn" style="left:443.7px;top:12.5px;width:115.3px;background:#4ea050"><svg class="abs" style="left:19.6px;top:10.5px" width="14.4" height="14.4" viewBox="0 0 512 512"><path d="M173.898 439.404l-166.400-166.400c-9.997-9.997-9.997-26.206 0-36.204l36.203-36.204c9.997-9.998 26.207-9.998 36.204 0L192 312.690 432.095 72.596c9.997-9.997 26.207-9.997 36.204 0l36.203 36.204c9.997 9.997 9.997 26.206 0 36.204l-294.400 294.401c-9.998 9.997-26.207 9.997-36.204-.001z" fill="#fff"/></svg><span class="abs" style="left:43.7px;top:0">保存する</span></div>
      <svg class="abs" style="left:574px;top:22.5px" width="11.2" height="10.9" viewBox="0 0 10.6 10.8" preserveAspectRatio="none"><rect width="10.6" height="10.8" rx="1.7" fill="#484848"/><path d="M2.400 5.600l2 2L8.300 3.200" fill="none" stroke="#fff" stroke-width="1.500"/></svg>
      <div class="abs" style="left:590.8px;top:20.1px;font-size:10.4px;font-weight:700;line-height:20px;color:#111;white-space:nowrap;letter-spacing:0.15px">e-場所システムへ反映</div>
    </div>
  </div>
  </div>
</div>
</body>
</html>
